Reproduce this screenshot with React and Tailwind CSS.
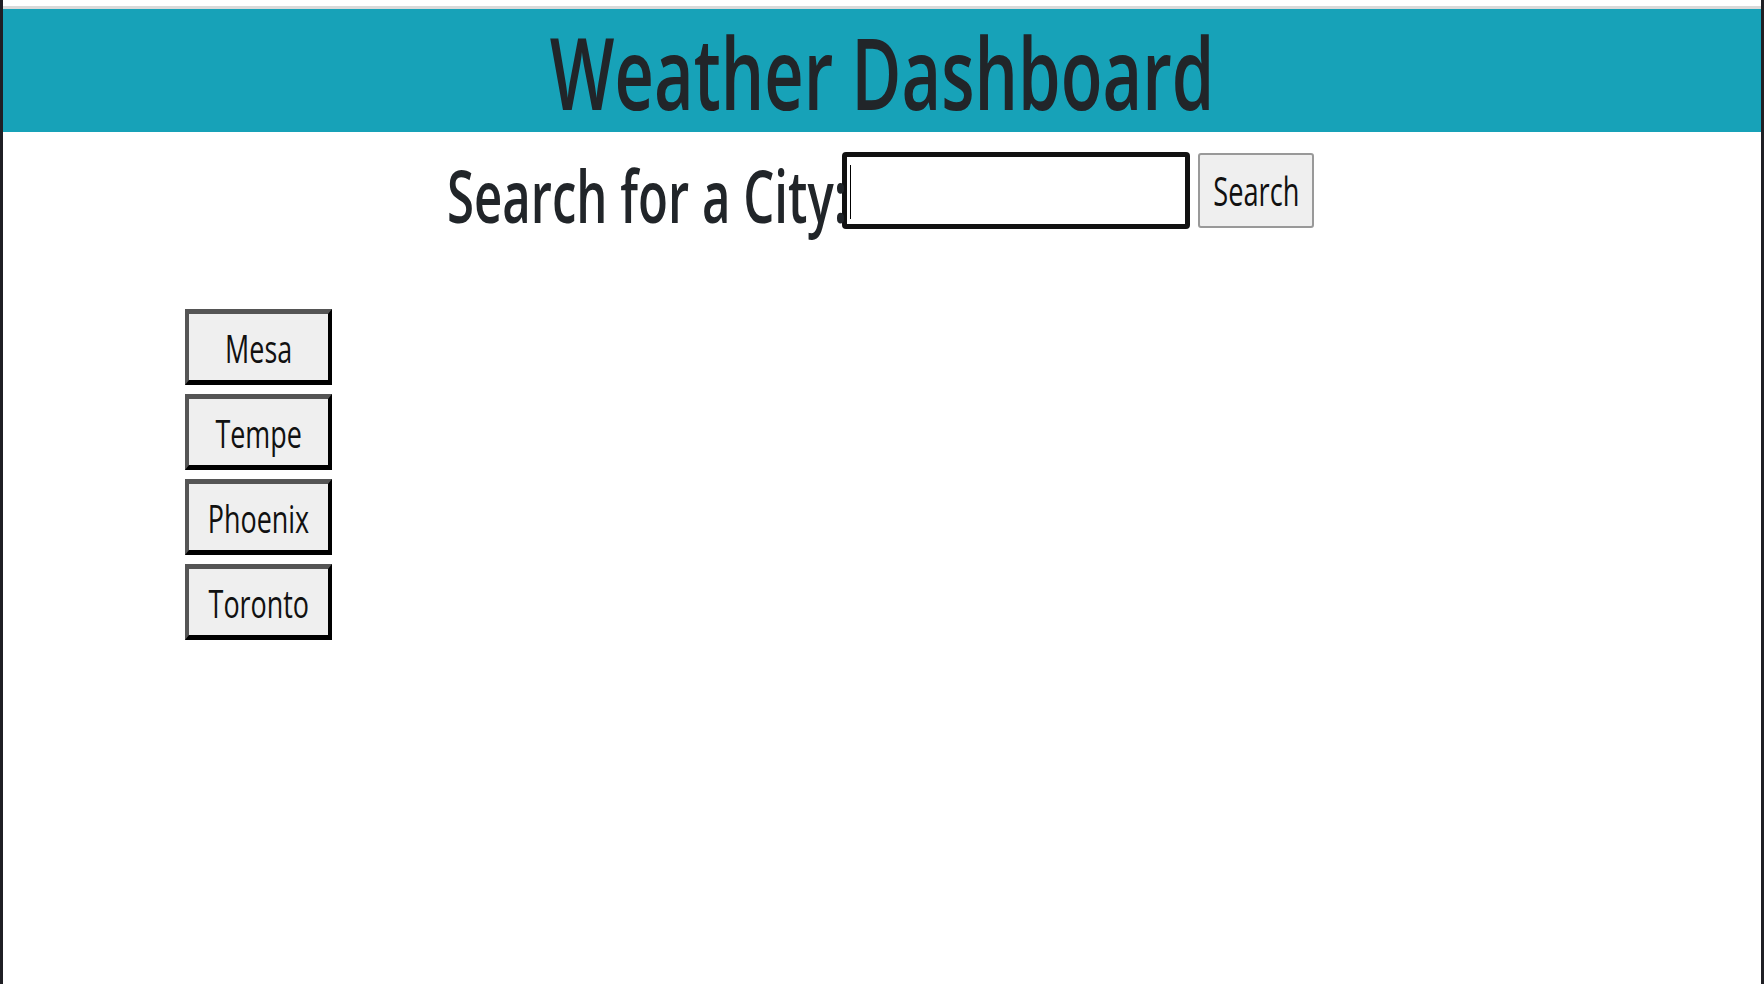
import React from "react";

const cities = ["Mesa", "Tempe", "Phoenix", "Toronto"];

export default function App() {
  return (
    <div className="min-h-screen bg-white border-l-[3px] border-r-[3px] border-[#1f1f24] font-['Open_Sans',sans-serif] text-[#212529]">
      <div className="h-[6px]" />
      <div className="h-[3px] bg-[#d9d9d9]" />
      <header className="h-[123px] bg-[#17a2b8] flex justify-center items-start pt-[12px]">
        <h1 className="inline-block whitespace-nowrap text-[100px] leading-none font-semibold scale-x-[0.685]">
          Weather Dashboard
        </h1>
      </header>

      <div className="flex justify-center items-start mt-[20px] pr-[3px]">
        <label className="w-[394px] h-[77px] mr-[1px] overflow-visible">
          <span className="inline-block origin-left whitespace-nowrap text-[72px] leading-none font-semibold mt-[7px] scale-x-[0.682]">
            Search for a City:
          </span>
        </label>
        <div className="w-[348px] h-[77px] border-[5px] border-[#111] rounded-[4px] bg-white">
          <div className="ml-[3px] mt-[8px] w-px h-[54px] bg-black" />
        </div>
        <button className="ml-[8px] mt-[1px] w-[116px] h-[75px] border-2 border-[#999] rounded-[3px] bg-[#efefef] flex items-center justify-center">
          <span className="inline-block whitespace-nowrap text-[40px] leading-none text-[#111] scale-x-[0.68]">
            Search
          </span>
        </button>
      </div>

      <div className="ml-[182px] mt-[80px] flex flex-col gap-[9px]">
        {cities.map((c) => (
          <button
            key={c}
            className="w-[147px] h-[76px] bg-[#efefef] border-solid border-t-[5px] border-l-[4px] border-b-[5px] border-r-[4px] border-t-[#555] border-l-[#555] border-b-black border-r-black flex items-center justify-center"
          >
            <span className="inline-block whitespace-nowrap text-[39px] leading-none text-[#111] scale-x-[0.69]">
              {c}
            </span>
          </button>
        ))}
      </div>
    </div>
  );
}
